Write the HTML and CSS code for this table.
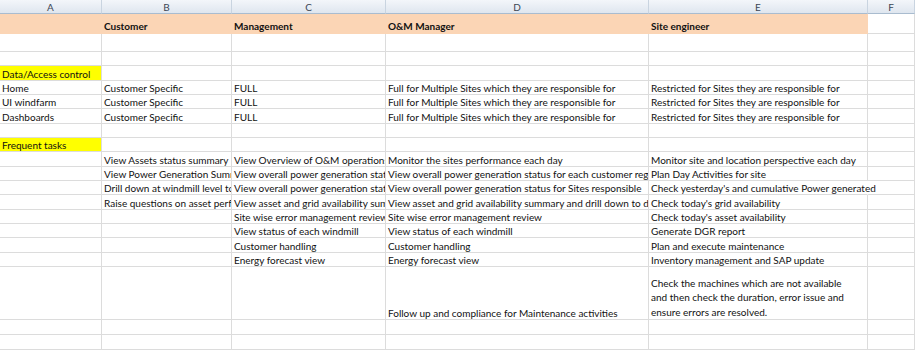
FILE: index.html
```html
<!DOCTYPE html>
<html lang="en">
<head>
    <meta charset="UTF-8">
    <title>Roles and tasks</title>
    <link rel="stylesheet" href="styles.css">
</head>
<body>
    <div class="sheet">
        <!-- column letters -->
        <div class="col-head">A</div>
        <div class="col-head">B</div>
        <div class="col-head">C</div>
        <div class="col-head">D</div>
        <div class="col-head">E</div>
        <div class="col-head">F</div>

        <!-- roles -->
        <div class="cell head"></div>
        <div class="cell head">Customer</div>
        <div class="cell head">Management</div>
        <div class="cell head">O&amp;M Manager</div>
        <div class="cell head">Site engineer</div>
        <div class="cell"></div>

        <div class="cell"></div><div class="cell"></div><div class="cell"></div><div class="cell"></div><div class="cell"></div><div class="cell"></div>
        <div class="cell"></div><div class="cell"></div><div class="cell"></div><div class="cell"></div><div class="cell"></div><div class="cell"></div>

        <!-- data / access control -->
        <div class="cell mark">Data/Access control</div>
        <div class="cell"></div><div class="cell"></div><div class="cell"></div><div class="cell"></div><div class="cell"></div>

        <div class="cell">Home</div>
        <div class="cell">Customer Specific</div>
        <div class="cell">FULL</div>
        <div class="cell">Full for Multiple Sites which they are responsible for</div>
        <div class="cell">Restricted for Sites they are responsible for</div>
        <div class="cell"></div>

        <div class="cell">UI windfarm</div>
        <div class="cell">Customer Specific</div>
        <div class="cell">FULL</div>
        <div class="cell">Full for Multiple Sites which they are responsible for</div>
        <div class="cell">Restricted for Sites they are responsible for</div>
        <div class="cell"></div>

        <div class="cell">Dashboards</div>
        <div class="cell">Customer Specific</div>
        <div class="cell">FULL</div>
        <div class="cell">Full for Multiple Sites which they are responsible for</div>
        <div class="cell">Restricted for Sites they are responsible for</div>
        <div class="cell"></div>

        <div class="cell"></div><div class="cell"></div><div class="cell"></div><div class="cell"></div><div class="cell"></div><div class="cell"></div>

        <!-- frequent tasks -->
        <div class="cell mark">Frequent tasks</div>
        <div class="cell"></div><div class="cell"></div><div class="cell"></div><div class="cell"></div><div class="cell"></div>

        <div class="cell"></div>
        <div class="cell">View Assets status summary</div>
        <div class="cell">View Overview of O&amp;M operations</div>
        <div class="cell">Monitor the sites performance each day</div>
        <div class="cell">Monitor site and location perspective each day</div>
        <div class="cell"></div>

        <div class="cell"></div>
        <div class="cell">View Power Generation Summary</div>
        <div class="cell">View overall power generation status</div>
        <div class="cell">View overall power generation status for each customer region</div>
        <div class="cell">Plan Day Activities for site</div>
        <div class="cell"></div>

        <div class="cell"></div>
        <div class="cell">Drill down at windmill level to see details</div>
        <div class="cell">View overall power generation status for sites</div>
        <div class="cell">View overall power generation status for Sites responsible</div>
        <div class="cell spill">Check yesterday's and cumulative Power generated</div>
        <div class="cell"></div>

        <div class="cell"></div>
        <div class="cell">Raise questions on asset performance</div>
        <div class="cell">View asset and grid availability summary</div>
        <div class="cell">View asset and grid availability summary and drill down to details</div>
        <div class="cell">Check today's grid availability</div>
        <div class="cell"></div>

        <div class="cell"></div>
        <div class="cell"></div>
        <div class="cell">Site wise error management review</div>
        <div class="cell">Site wise error management review</div>
        <div class="cell">Check today's asset availability</div>
        <div class="cell"></div>

        <div class="cell"></div>
        <div class="cell"></div>
        <div class="cell">View status of each windmill</div>
        <div class="cell">View status of each windmill</div>
        <div class="cell">Generate DGR report</div>
        <div class="cell"></div>

        <div class="cell"></div>
        <div class="cell"></div>
        <div class="cell">Customer handling</div>
        <div class="cell">Customer handling</div>
        <div class="cell">Plan and execute maintenance</div>
        <div class="cell"></div>

        <div class="cell"></div>
        <div class="cell"></div>
        <div class="cell">Energy forecast view</div>
        <div class="cell">Energy forecast view</div>
        <div class="cell">Inventory management and SAP update</div>
        <div class="cell"></div>

        <div class="cell"></div>
        <div class="cell"></div>
        <div class="cell"></div>
        <div class="cell">Follow up and compliance for Maintenance activities</div>
        <div class="cell wrap">Check the machines which are not available<br>and then check the duration, error issue and<br>ensure errors are resolved.</div>
        <div class="cell"></div>

        <div class="cell"></div><div class="cell"></div><div class="cell"></div><div class="cell"></div><div class="cell"></div><div class="cell"></div>
        <div class="cell"></div><div class="cell"></div><div class="cell"></div><div class="cell"></div><div class="cell"></div><div class="cell"></div>
    </div>
</body>
</html>
```

FILE: styles.css
```css
body {
    margin: 0;
    background-color: #ffffff;
    color: #111111;
    font-family: Lato, "Open Sans", sans-serif;
    font-size: 10px;
    overflow: hidden;
}

.sheet {
    display: grid;
    grid-template-columns: 102px 130px 154px 263px 219px 1fr;
    grid-template-rows: 14px 20px 18px repeat(15, 14.333px) 53.5px 14.5px 15px;
    height: 350px;
}

.col-head {
    display: flex;
    align-items: center;
    justify-content: center;
    background: linear-gradient(#f3f6fa, #dfe6ef);
    border-right: 1px solid #c9d4e0;
    border-bottom: 1px solid #a9bccf;
    color: #3b4654;
    font-size: 10px;
}

.cell {
    display: flex;
    align-items: flex-end;
    padding: 0 2px;
    border-right: 1px solid #dcdcdc;
    border-bottom: 1px solid #dcdcdc;
    white-space: nowrap;
    overflow: hidden;
    line-height: 11px;
    min-width: 0;
}

.head {
    background-color: #fbd5b5;
    border-color: #fbd5b5;
    font-weight: bold;
    padding-bottom: 1px;
}

.mark {
    background-color: #ffff00;
}

.spill {
    overflow: visible;
    border-right-color: transparent;
    position: relative;
    z-index: 1;
}

.wrap {
    white-space: normal;
    line-height: 14.5px;
    padding-bottom: 0;
}
```
